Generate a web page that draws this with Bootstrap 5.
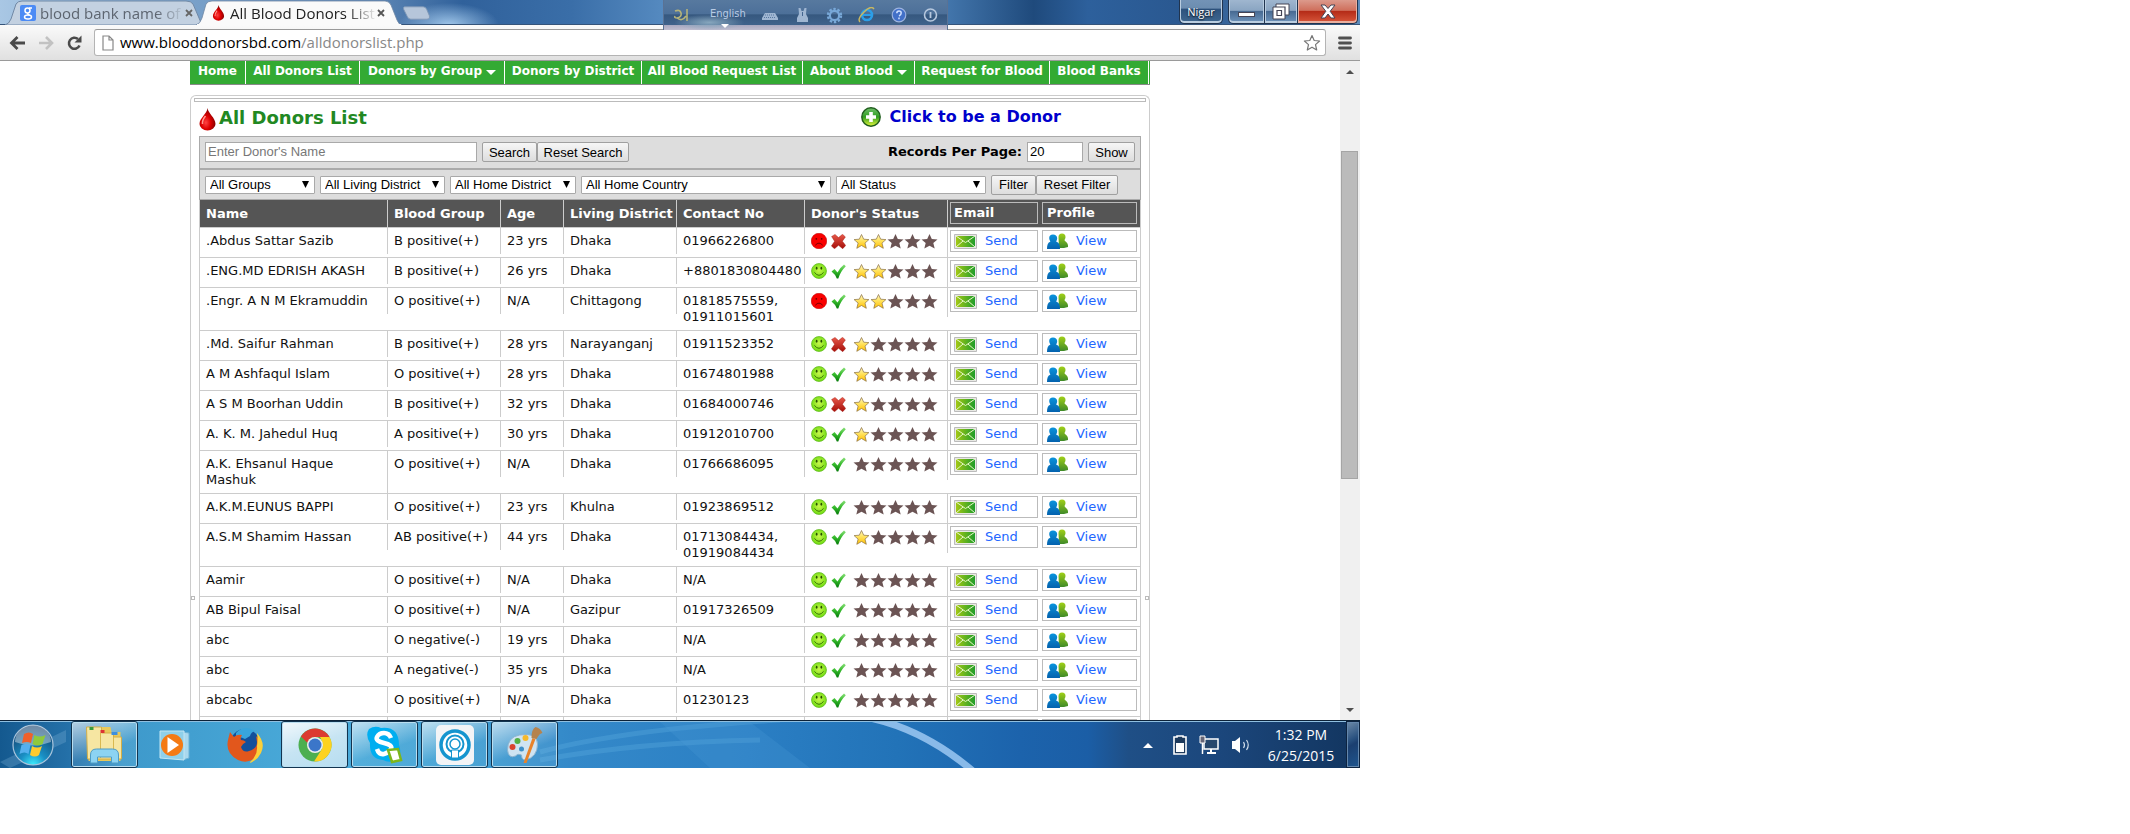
<!DOCTYPE html>
<html lang="en">
<head>
<meta charset="utf-8">
<meta name="viewport" content="width=device-width, initial-scale=1">
<title>All Blood Donors List</title>
<link rel="stylesheet" href="https://cdn.jsdelivr.net/npm/bootstrap@5.3.0/dist/css/bootstrap.min.css">
<style>
  html, body { height: 100%; }
  body { margin: 0; background: #fff; color: #000; overflow: hidden; font-family: "DejaVu Sans", Verdana, sans-serif; font-size: 13px; line-height: 16px; }
  a { text-decoration: none; }
  svg { display: block; flex: none; }
  .desk { width: 63.85%; height: calc(100% - 66px); }
  .ui { font-family: "Open Sans", "Segoe UI", sans-serif; }

  /* title bar */
  .strip { height: 25px; position: relative; background:
      radial-gradient(ellipse 50px 22px at 33% 100%, #9fc6ea 0, transparent 100%),
      linear-gradient(90deg, #a9c7e4 0, #86add3 8%, #5b84b3 28%, #30619b 34%, #3a6ea8 42%, #5a8fc4 50%, #4c81b8 68%, #1f4a7c 76%, #2d609c 80%, #2a5890 87%, #5e8cba 100%); }
  .strip::after { content: ""; position: absolute; left: 0; right: 0; bottom: 0; height: 1px; background: #35547a; }
  .tab { position: relative; height: 25px; margin-left: 5px; width: 198px; padding: 0 10px 0 15px; font-size: 15px; color: #5d6570; z-index: 1; }
  .tab + .tab { margin-left: -7px; width: 206px; color: #222; padding: 0 17px 0 15px; z-index: 2; }
  .tab .shape { position: absolute; left: 0; top: 0; width: 100%; height: 25px; }
  .tab .label { position: relative; flex: 1; margin-left: 4px; white-space: nowrap; line-height: 24px; -webkit-mask-image: linear-gradient(90deg, #000 80%, transparent); mask-image: linear-gradient(90deg, #000 80%, transparent); }
  .tab svg.ico { position: relative; }
  .plainbtn { border: 0; background: none; padding: 0; line-height: 0; color: inherit; }
  .tab .plainbtn { position: relative; }
  .winbtns { position: absolute; right: 2px; top: 0; height: 24px; }
  .winbtns button { border: 1px solid #20344f; border-top: 0; box-shadow: inset 0 -1px 0 1px #b9cde0; background: linear-gradient(#9fb6cf 0, #8aa5c2 45%, #486b93 50%, #7096bd 100%); height: 24px; padding: 0; color: #fff; }
  .winbtns .user { width: 44px; margin-right: 5px; border-radius: 0 0 5px 5px; font-size: 11px; line-height: 20px; background: linear-gradient(#7393b6 0, #6c8db0 35%, #2d527d 40%, #406890 100%); text-shadow: 0 1px 2px #000; }
  .winbtns .min { width: 37px; border-radius: 0 0 0 5px; }
  .winbtns .max { width: 33px; border-left: 0; }
  .winbtns .cls { width: 60px; border-left: 0; border-radius: 0 0 5px 0; background: linear-gradient(#dc9a8c 0, #cf6f5c 45%, #b52c18 50%, #d8583c 100%); box-shadow: inset 0 -1px 0 1px #eab0a0; }
  .winbtns svg { margin: 0 auto; }
  .ime { position: absolute; left: 663px; top: 0; width: 285px; height: 30px; z-index: 3; color: #b9cbe4; font-size: 11px; font-family: "DejaVu Sans Condensed", "DejaVu Sans", sans-serif; background:
      radial-gradient(ellipse 35px 8px at 16% 75%, #86a6bd 0, transparent 100%),
      linear-gradient(#57799f 0, #4d7099 45%, #36587f 50%, #3f628b 82%, #a9a9c1 84%, #c0bed0 100%); border: 1px solid #5a7294; border-top: 0; border-bottom: 0; }
  .ime svg { position: absolute; top: 7px; }
  .ime span { position: absolute; left: 46px; top: 6px; }

  /* address bar */
  .chromebar { height: 36px; background: linear-gradient(#fafafa, #e0e0e0); border-bottom: 1px solid #9a9a9a; padding: 4px 8px 4px 9px; gap: 12px; }
  .chromebar .address { flex: 1; height: 27px; padding: 0 4px 0 7px; gap: 6px; background: #fff; border: 1px solid #b4b4b4; border-top-color: #999; border-radius: 3px; font-size: 15px; line-height: 25px; }
  .chromebar .address .tail { color: #888; }

  /* web page */
  .viewport { flex: 1; min-height: 0; background: #fff; }
  .pagearea { flex: 1; min-width: 0; overflow: hidden; }
  .site { width: 960px; margin: 0 auto; }
  .scroller { width: 20px; background: #f0f0f0; padding: 8px 2px 8px 1px; }
  .scroller i { display: block; border: 4px solid transparent; border-top: 0; border-bottom-color: #505050; width: 8px; margin: 1px auto 0; }
  .scroller i.down { border-top: 4px solid #505050; border-bottom: 0; margin-top: auto; }
  .scroller b { display: block; width: 17px; height: 51%; margin-top: 77px; background: #bbb; border: 1px solid #a5a5a5; }
  .greennav { display: grid; grid-template-columns: 56fr 114fr 145fr 137fr 161fr 112fr 135fr 99fr 1fr; height: 24px; background: #3a3; border-bottom: 1px solid #888; font-size: 12px; font-weight: bold; }
  .greennav a { color: #fff; border-right: 1px solid #fff; text-align: center; line-height: 20px; white-space: nowrap; }
  .greennav .caret { display: inline-block; border: 5px solid transparent; border-top-color: #fff; border-bottom: 0; margin-left: 4px; }
  .panel { position: relative; margin-top: 10px; border: 1px solid #ccc; border-bottom: 0; border-radius: 6px 6px 0 0; padding: 2px 8px 0; }
  .panel .rail { height: 4px; border: 1px solid #bbb; margin: 0 -5px; }
  .panel .knob { position: absolute; top: 500px; width: 4px; height: 4px; border: 1px solid #bbb; }
  .titlerow { height: 34px; padding-bottom: 4px; }
  .titlerow h1 { font-size: 18px; line-height: 24px; font-weight: bold; color: #282; margin: 2px 0 0 3px; }
  .titlerow .join { font-size: 16px; font-weight: bold; color: #00c; margin-right: 80px; gap: 9px; }
  .band { height: 33px; background: #ddd; border: 1px solid #aaa; padding: 0 5px 1px; }
  .band + .band { height: 31px; padding-bottom: 0; }
  .band, .band input, .band button, .band select { color: #000; }
  .band .form-control, .band .form-select, .band .btn { font-family: "Liberation Sans", Arial, sans-serif; font-size: 13px; border-radius: 0; line-height: 15px; }
  .band .form-control { height: 20px; border: 1px solid #a9a9a9; padding: 0 2px 1px; }
  .band .form-control::placeholder { color: #777; opacity: 1; }
  .band .form-select { height: 18px; border: 1px solid #a9a9a9; padding: 0 16px 0 4px; border-radius: 1px; background: #fff url("data:image/svg+xml,%3Csvg xmlns='http://www.w3.org/2000/svg' width='7' height='7'%3E%3Cpath d='M0 0h7L3.5 7z'/%3E%3C/svg%3E") no-repeat right 5px center; background-size: 7px 7px; margin-right: 5px; }
  .band .btn { height: 20px; border: 1px solid #a0a0a0; padding: 0; background: linear-gradient(#f6f6f6, #ddd); border-radius: 2px; white-space: nowrap; }
  .w1 { width: 110px; } .w2 { width: 125px; } .w3 { width: 126px; } .w4 { width: 250px; } .w5 { width: 150px; }
  .band .namefield { flex: 0 0 272px; }
  .band .perpage { width: 56px; margin: 0 5px; }
  .b45 { width: 45px; } .b47 { width: 47px; } .b55 { width: 55px; margin-left: 5px; } .b82 { width: 82px; } .b92 { width: 92px; }

  /* donors table */
  .donors.table { table-layout: fixed; width: 100%; margin: 0; border-collapse: separate; border-spacing: 0; border-left: 1px solid #ccc; border-right: 1px solid #ccc; color: #111; }
  .donors col:nth-child(1) { width: 188px; } .donors col:nth-child(2), .donors col:nth-child(4) { width: 113px; }
  .donors col:nth-child(3) { width: 63px; } .donors col:nth-child(5) { width: 128px; } .donors col:nth-child(6) { width: 143px; } .donors col:nth-child(7) { width: 91px; }
  .donors.table > :not(caption) > tr > * { border: 0; border-bottom: 1px solid #ccc; box-shadow: none; height: 30px; padding: 5px 0 5px 6px; vertical-align: top; font-size: 13px; line-height: 16px; background: linear-gradient(#ccc, #ccc) no-repeat right top / 1px 26px; }
  .donors.table > tbody > tr > .deep { background-size: 1px 100%; }
  .donors.table > tbody > tr > .stat { background-size: 1px 29px; padding: 5px 0 0 6px; }
  .donors.table > thead > tr > th { height: 28px; color: #fff; background: #555 linear-gradient(#ccc, #ccc) no-repeat right top / 1px 100%; }
  .donors.table > thead > tr > th:not(.act) { padding-top: 6px; }
  .donors.table > :not(caption) > tr > .act { background-image: none; padding: 2px 0 0 3px; }
  .donors.table > :not(caption) > tr > .act.mail { padding-left: 2px; }
  .actbox { display: flex; align-items: center; height: 22px; border: 1px solid #bbb; padding-left: 3px; margin-right: 3px; color: #26f; }
  .mail .actbox { margin-right: 1px; }
  .prof .actbox { padding-left: 4px; }
  .actbox span { margin-left: 8px; }
  th .actbox { color: #fff; }
  .stat .icons { display: flex; align-items: center; }
  .stat .stars { display: flex; margin-left: 7px; }

  /* taskbar */
  .taskbar { height: 48px; border-top: 1px solid #0c2238; box-shadow: inset 0 1px 0 #8fbfe0; color: #fff; position: relative; overflow: hidden; background: linear-gradient(90deg, #14598f 0, #2470a8 5%, #3e99cb 9%, #4aabda 24%, #3f9fd2 34%, #3489c9 42%, #2b7fc4 55%, #2273b8 66%, #1c63ac 75%, #1b5ea6 80%, #1f4f86 83%, #1b467b 90%, #12355f 100%); }
  .taskbar .swoosh { position: absolute; left: 0; top: 1px; width: 100%; height: 46px; }
  .taskbar button { position: relative; border: 0; background: none; padding: 0; color: #fff; height: 47px; }
  .taskbar .start { width: 66px; margin-right: 5px; }
  .taskbar .app { width: 67px; margin-right: 3px; }
  .taskbar .app svg, .taskbar .start svg { margin: 0 auto; }
  .taskbar .open { border: 1px solid #123450; border-radius: 3px; box-shadow: inset 0 0 0 1px #b9def0; background: linear-gradient(160deg, #ffffffaa 0, #ffffff44 40%, #ffffff11 60%); }
  .taskbar .live { background: linear-gradient(160deg, #ffffffee 0, #ffffffb0 50%, #ffffff99 100%); }
  .tray { position: relative; gap: 12px; margin-right: 7px; }
  .clock { font-size: 14px; line-height: 21px; text-align: center; width: 76px; }
  .taskbar .showdesk { width: 14px; border: 1px solid #0c2340; box-shadow: inset 0 0 0 1px #6487ac; background: linear-gradient(150deg, #6d8aa8 0, #28507f 40%, #1b3f70 50%, #1f568f 100%); }
</style>
</head>
<body>
<svg width="0" height="0" class="position-absolute" aria-hidden="true">
  <defs>
    <radialGradient id="gRed" cx=".4" cy=".65" r=".6"><stop offset="0" stop-color="#f44"/><stop offset=".5" stop-color="#d00"/><stop offset="1" stop-color="#800"/></radialGradient>
    <linearGradient id="gStar" x1="0" y1="0" x2="0" y2="1"><stop offset="0" stop-color="#fff6c8"/><stop offset=".4" stop-color="#ffe668"/><stop offset="1" stop-color="#ffbe00"/></linearGradient>
    <linearGradient id="gTick" x1="0" y1="0" x2="0" y2="1"><stop offset="0" stop-color="#8ae07a"/><stop offset=".5" stop-color="#35b92c"/><stop offset="1" stop-color="#067a0a"/></linearGradient>
    <linearGradient id="gCross" x1="0" y1="0" x2="0" y2="1"><stop offset="0" stop-color="#e8594a"/><stop offset="1" stop-color="#a50d08"/></linearGradient>
    <linearGradient id="gMail" x1="0" y1="0" x2="1" y2="0"><stop offset="0" stop-color="#a4c814"/><stop offset="1" stop-color="#1f9d2a"/></linearGradient>
    <linearGradient id="gBlue" x1="0" y1="0" x2="0" y2="1"><stop offset="0" stop-color="#0a93dc"/><stop offset="1" stop-color="#0462ae"/></linearGradient>
    <linearGradient id="gGreen" x1="0" y1="0" x2="0" y2="1"><stop offset="0" stop-color="#a0d018"/><stop offset="1" stop-color="#3f8a28"/></linearGradient>
    <linearGradient id="gPlus" x1="0" y1="0" x2="0" y2="1"><stop offset="0" stop-color="#6fbf6a"/><stop offset=".5" stop-color="#2f9e20"/><stop offset="1" stop-color="#e6f83a"/></linearGradient>
    <radialGradient id="gSmile" cx=".5" cy=".45" r=".55"><stop offset="0" stop-color="#c8f54a"/><stop offset="1" stop-color="#6edc10"/></radialGradient>
    <symbol id="drop" viewBox="0 0 17 23"><path d="M8.500 0C9 5 16.500 10 16.500 16a8 6.500 0 0 1-16 0C.5 10 8 6 8.500 0z" fill="url(#gRed)"/><path d="M6.500 8c-2 2.500-3.500 5-3 8" stroke="#ff9a90" stroke-width="1.500" fill="none"/></symbol>
    <symbol id="sad" viewBox="0 0 15 15"><circle cx="7.500" cy="7.500" r="7.300" fill="#f90000" stroke="#b00" stroke-width=".5"/><circle cx="5" cy="5.500" r=".8" fill="#600"/><circle cx="10" cy="5.500" r=".8" fill="#600"/><path d="M4 11.500q3.500-4 7 0" fill="none" stroke="#700" stroke-width=".9"/></symbol>
    <symbol id="smile" viewBox="0 0 15 15"><circle cx="7.500" cy="7.500" r="7" fill="url(#gSmile)" stroke="#62b820" stroke-width=".7"/><ellipse cx="5.300" cy="5" rx=".8" ry="1.400" fill="#264d00"/><ellipse cx="9.700" cy="5" rx=".8" ry="1.400" fill="#264d00"/><path d="M3.200 8.800q4.300 5.500 8.600 0" fill="none" stroke="#2d6000" stroke-width=".8"/></symbol>
    <symbol id="tick" viewBox="0 0 15 15"><path d="M.5 7.500 3.500 5l3 3.500Q9 3.500 13 .5l1.800 1.800Q9.500 7.500 7.300 14.500H5.800Q4 10 .5 7.500z" fill="url(#gTick)"/></symbol>
    <symbol id="cross" viewBox="0 0 15 15"><path d="M.6 2.500 4 .4l3.500 3.200L11.500.3l2.900 2.600-3 4.300 3.300 4.300-3 3.200-4.200-3.400-4 3.500L.4 12l3.200-4.700z" fill="url(#gCross)" stroke="#9c1008" stroke-width=".4"/></symbol>
    <symbol id="staron" viewBox="0 0 16 15"><path d="M8 .5l2.200 4.700 5.200.4-3.900 3.500 1.300 5.200L8 11.500l-4.700 2.800 1.300-5.200L.6 5.600l5.200-.4z" fill="url(#gStar)" stroke="#8a7040" stroke-width=".7"/></symbol>
    <symbol id="staroff" viewBox="0 0 16 15"><path d="M8 0l2.300 5 5.700.4-4.200 3.700 1.400 5.500L8 11.700l-5.200 2.900 1.400-5.500L0 5.400 5.700 5z" fill="#6b5454"/></symbol>
    <symbol id="envelope" viewBox="0 0 23 15"><path d="M.5.5h22v14H.5z" fill="#e8e8e4" stroke="#bbb"/><path d="M2 2h19v11H2z" fill="url(#gMail)"/><path d="M2 2l9.500 6.500L21 2M2 13l7-6M21 13l-7-6" stroke="#e8f8c8" fill="none"/></symbol>
    <symbol id="people" viewBox="0 0 21 16"><path d="M11.500 4a3.500 3.500 0 0 1 7 0c0 1.500-.7 2.300-1 3 0 1.300 3.500 2.500 3.500 5.500V14l-4 1h-5z" fill="url(#gGreen)"/><path d="M2.200 5q0-3.500 3.800-3.500T10.200 5c0 2-.9 2.800-.9 3.800C12 9.500 13.200 12 13 16H0c0-4 1-6.500 3.300-7.200C3.300 7.500 2.200 7 2.200 5z" fill="url(#gBlue)"/></symbol>
  </defs>
</svg>

<div class="desk d-flex flex-column">
  <header class="strip ui d-flex">
    <div class="tab d-flex align-items-center">
      <svg class="shape" viewBox="0 0 198 25" preserveAspectRatio="none"><path d="M0 25Q4 24 6 19L11 4Q13 1 17 1H181Q186 1 188 4L197 25z" fill="#c3d1e1" stroke="#7189a6"/></svg>
      <svg class="ico" width="16" height="16"><rect width="16" height="16" rx="2" fill="#4c8bf5"/><g fill="none" stroke="#fff" stroke-width="1.500"><circle cx="7.500" cy="5.500" r="2.500"/><ellipse cx="8" cy="12" rx="3.500" ry="2"/><path d="M9 3h3M7.500 8q0 1.500 2 2"/></g></svg>
      <span class="label">blood bank name of</span>
      <button class="plainbtn" aria-label="Close tab"><svg width="8" height="8"><path d="M1 1l6 6M7 1L1 7" stroke="#666" stroke-width="1.800"/></svg></button>
    </div>
    <div class="tab d-flex align-items-center">
      <svg class="shape" viewBox="0 0 206 25" preserveAspectRatio="none"><path d="M0 25Q4 24 6 18L10 4Q12 1 16 1H189Q193 1 195 5L201 20Q203 25 206 25z" fill="#fafafa" stroke="#6f86a3" stroke-width=".8"/><path d="M1 25h204" stroke="#fafafa" stroke-width="2"/></svg>
      <svg class="ico" width="15" height="16"><use href="#drop"/></svg>
      <span class="label">All Blood Donors List</span>
      <button class="plainbtn" aria-label="Close tab"><svg width="8" height="8"><path d="M1 1l6 6M7 1L1 7" stroke="#555" stroke-width="1.800"/></svg></button>
    </div>
    <button class="plainbtn align-self-start mt-1" aria-label="New tab"><svg width="30" height="18" viewBox="0 0 34 18"><path d="M3 2H24Q27 2 28 5L31 12Q32 16 28 16H10Q7 16 6 13L2 5Q1 2 3 2z" fill="#b6c6da" stroke="#7f97b5"/></svg></button>
    <div class="ime">
      <svg style="left:10px" width="15" height="16"><path d="M13 2v12M1 4q5-2 6 2t-4 5q-3 0-2-2M3 11q5 4 9-2" fill="none" stroke="#b5b37a" stroke-width="1.600"/></svg>
      <span>English</span>
      <svg style="left:57px;top:24px" width="8" height="4"><path d="M0 0h8L4 4z" fill="#fff"/></svg>
      <svg style="left:98px" width="16" height="14"><path d="M3 6h10l3 5v2H0v-2z" fill="#9fb6d2"/><path d="M3 8h10M2 10.500h12" stroke="#56779f" stroke-dasharray="1 1"/></svg>
      <svg style="left:132px" width="13" height="16"><path d="M2.500 1h2l1 3h2l1-3h2l-.5 6L12 11v4H1v-4l2-4z" fill="#9fb6d2"/><path d="M6.500 5v4" stroke="#43658f"/></svg>
      <svg style="left:162px" width="17" height="17"><circle cx="8.500" cy="8.500" r="6.500" fill="none" stroke="#78a8d8" stroke-width="2.400" stroke-dasharray="2.400 1.700"/><circle cx="8.500" cy="8.500" r="4.600" fill="none" stroke="#78a8d8" stroke-width="2.200"/></svg>
      <svg style="left:194px" width="17" height="16"><circle cx="9" cy="8" r="5" fill="none" stroke="#2b9ee8" stroke-width="2.600"/><path d="M5 8h9" stroke="#2b9ee8" stroke-width="2"/><path d="M2 15Q-1 12 6 5T16 2" fill="none" stroke="#c9b860" stroke-width="1.500"/></svg>
      <svg style="left:227px" width="16" height="16"><circle cx="8" cy="8" r="6.800" fill="#4270c8" stroke="#9db4e0" stroke-width="1.200"/><path d="M5.800 6.300q0-2.300 2.200-2.300t2.200 2-2.200 3M8 10.500v1.800" fill="none" stroke="#cfe0ff" stroke-width="1.500"/></svg>
      <svg style="left:259px" width="15" height="16"><circle cx="7.500" cy="8" r="6" fill="none" stroke="#b7c8de" stroke-width="1.600"/><path d="M7.500 5v6" stroke="#b7c8de" stroke-width="1.800"/></svg>
    </div>
    <div class="winbtns d-flex">
      <button class="user">Nigar</button>
      <button class="min" aria-label="Minimize"><svg width="17" height="10"><rect x=".5" y="5.500" width="16" height="4" fill="#fff" stroke="#445"/></svg></button>
      <button class="max" aria-label="Restore"><svg width="18" height="17"><path d="M4 1h13v11h-4v4H1V4h3z" fill="#fff" stroke="#445"/><path d="M4 4h9v8M5 7.500h4.500v5H5z" fill="none" stroke="#445" stroke-width="1.200"/></svg></button>
      <button class="cls" aria-label="Close"><svg width="16" height="15"><path d="M1 1h4l3 3.500L11 1h4l-4.800 6.300L15 14h-4L8 10l-3 4H1l4.800-6.700z" fill="#fff" stroke="#445"/></svg></button>
    </div>
  </header>

  <div class="chromebar ui d-flex align-items-center">
    <button class="plainbtn" aria-label="Back"><svg width="17" height="16"><path d="M16 8H3M8.500 2 2.500 8l6 6" fill="none" stroke="#4a4a4a" stroke-width="2.800"/></svg></button>
    <button class="plainbtn" aria-label="Forward"><svg width="17" height="16"><path d="M1 8h12M8 2l6 6-6 6" fill="none" stroke="#c2c2c2" stroke-width="2.600"/></svg></button>
    <button class="plainbtn" aria-label="Reload"><svg width="15" height="16"><path d="M12.500 10.500A5.500 5.500 0 1 1 11 4" fill="none" stroke="#4a4a4a" stroke-width="2.600"/><path d="M14.500.5v7h-7z" fill="#4a4a4a"/></svg></button>
    <div class="address d-flex align-items-center">
      <svg width="12" height="16"><path d="M1 1h6l4 4v10H1zM7 1v4h4" fill="#fff" stroke="#888" stroke-width="1.200"/></svg>
      <span class="flex-fill">www.blooddonorsbd.com<span class="tail">/alldonorslist.php</span></span>
      <svg width="18" height="18"><path d="M9 1.500l2.200 5 5.400.5-4.100 3.600 1.200 5.400L9 13.200 4.300 16l1.200-5.400L1.400 7l5.400-.5z" fill="#fff" stroke="#777" stroke-width="1.200" stroke-linejoin="round"/></svg>
    </div>
    <button class="plainbtn" aria-label="Menu"><svg width="14" height="14"><path d="M1.500 2h11M1.500 7h11M1.500 12h11" stroke="#505050" stroke-width="2.800" stroke-linecap="round"/></svg></button>
  </div>

  <div class="viewport d-flex">
    <main class="pagearea">
      <div class="site">
        <nav class="greennav">
          <a href="#">Home</a><a href="#">All Donors List</a><a href="#">Donors by Group<span class="caret"></span></a><a href="#">Donors by District</a><a href="#">All Blood Request List</a><a href="#">About Blood<span class="caret"></span></a><a href="#">Request for Blood</a><a href="#">Blood Banks</a>
        </nav>
        <section class="panel">
          <div class="rail"></div>
          <span class="knob start-0"></span><span class="knob end-0"></span>
          <div class="titlerow d-flex align-items-center">
            <svg class="mt-1" width="17" height="23"><use href="#drop"/></svg>
            <h1 class="me-auto">All Donors List</h1>
            <a class="join d-flex align-items-center" href="#">
              <svg width="20" height="20"><circle cx="10" cy="10" r="9.200" fill="url(#gPlus)" stroke="#1f5c1c" stroke-width="1.400"/><path d="M10 5v10M5 10h10" stroke="#fff" stroke-width="3.600"/></svg>
              Click to be a Donor</a>
          </div>
          <form class="band d-flex align-items-center">
            <input class="form-control namefield" type="text" placeholder="Enter Donor's Name" aria-label="Donor's name">
            <button type="button" class="btn b55">Search</button>
            <button type="button" class="btn b92 me-auto">Reset Search</button>
            <label class="fw-bold" for="perpage">Records Per Page:</label>
            <input class="form-control perpage" id="perpage" type="text" value="20">
            <button type="button" class="btn b47">Show</button>
          </form>
          <form class="band d-flex align-items-center">
            <select class="form-select w1" aria-label="Group"><option>All Groups</option></select>
            <select class="form-select w2" aria-label="Living district"><option>All Living District</option></select>
            <select class="form-select w3" aria-label="Home district"><option>All Home District</option></select>
            <select class="form-select w4" aria-label="Home country"><option>All Home Country</option></select>
            <select class="form-select w5" aria-label="Status"><option>All Status</option></select>
            <button type="button" class="btn b45">Filter</button>
            <button type="button" class="btn b82">Reset Filter</button>
          </form>
          <table class="table donors">
            <colgroup><col><col><col><col><col><col><col><col></colgroup>
            <thead><tr><th>Name</th><th>Blood Group</th><th>Age</th><th>Living District</th><th>Contact No</th><th>Donor's Status</th><th class="act mail"><div class="actbox">Email</div></th><th class="act prof"><div class="actbox">Profile</div></th></tr></thead>
            <tbody id="rows"></tbody>
          </table>
        </section>
      </div>
    </main>
    <div class="scroller d-flex flex-column"><i></i><b></b><i class="down"></i></div>
  </div>

  <footer class="taskbar ui d-flex">
    <svg class="swoosh" viewBox="0 0 1360 46" preserveAspectRatio="none">
      <path d="M540 30Q620 8 780 -2M540 38Q640 20 760 18" stroke="#5cabe0" stroke-width="5" fill="none" opacity=".35"/>
      <path d="M660 0h90l60 46h-100z" fill="#4b9bd8" opacity=".25"/>
      <path d="M870-4Q925 8 974 50" stroke="#9cc8f2" stroke-width="7" fill="none" opacity=".85"/>
      <path d="M0 40L66 8v12L10 46z" fill="#7fb2d8" opacity=".3"/>
    </svg>
    <button class="start" aria-label="Start"><svg width="44" height="44" viewBox="0 0 42 44"><defs><radialGradient id="orb" cx=".5" cy="1" r=".95"><stop offset="0" stop-color="#3ff0ff"/><stop offset=".35" stop-color="#1a8fc4"/><stop offset="1" stop-color="#123f6c"/></radialGradient></defs><circle cx="21" cy="22" r="20" fill="url(#orb)" stroke="#a8c4dc" stroke-width="1.200"/><path d="M3 19a18 17 0 0 1 36 0q-18 7-36 0z" fill="#fff" opacity=".4"/><path d="M12 11q5-3 9-0l-2 9q-4-2-9 0z" fill="#f0602a"/><path d="M22.500 12q5 3 11 0l-3 9q-5 3-10-0z" fill="#8fc93c"/><path d="M9.500 22q5-2 9 0l-2 9q-4-3-9 0z" fill="#55b0ee"/><path d="M20 23q5 3 10 0l-3 9q-4 3-9 0z" fill="#ffcb2e"/></svg></button>
    <button class="app open" aria-label="Explorer"><svg width="39" height="40" viewBox="0 0 38 40"><path d="M3 5h8l2-3h12l1 5h9v29H3z" fill="#e9c95a"/><path d="M1 2h15v6h12v4h8v22H2z" fill="#f6e6a2" stroke="#d2ae48"/><path d="M15 8v25M28 12v21" stroke="#d8b850"/><path d="M4 2h4v3H4z" fill="#3a9c3a"/><path d="M15 5h4v3h-4z" fill="#d33"/><path d="M26 7h6v3h-6z" fill="#3c8fe0"/><path d="M5 38v-8q0-6 6-6h16q6 0 6 6v8h-7v-6H12v6z" fill="#8cd3f2" stroke="#4f9cc4"/></svg></button>
    <button class="app" aria-label="Media Player"><svg width="34" height="34" viewBox="0 0 32 34"><path d="M24 4l6 1v25l-6 2z" fill="#a9d8ee" stroke="#6ab2d6"/><path d="M1 3h24v29L1 30z" fill="#8fd0ea" stroke="#c3e6f4"/><circle cx="13" cy="17" r="11" fill="#f47a14"/><path d="M8.500 9 20 17 8.500 25z" fill="#fff"/></svg></button>
    <button class="app" aria-label="Firefox"><svg width="36" height="38" viewBox="0 0 36 38"><circle cx="18" cy="18" r="15" fill="#13509a"/><path d="M9 7Q17-2 28 5q-4 1-5 5l-5 3q-5-3-9-1z" fill="#38a5dc"/><path d="M3 6q3 4 4 5 3-3 8-2-2 3-1 5 3 0 5 2-4 2-5 5 2 6 8 4 8-2 8-9l-1-6Q37 18 31 29 22 39 11 34-2 27 1 14z" fill="#e2571c"/><path d="M30 7q9 10 4 20-4 8-12 10 9-7 8-17 1-7 0-13z" fill="#fbd03a"/></svg></button>
    <button class="app open live" aria-label="Chrome"><svg width="36" height="36" viewBox="0 0 34 36"><circle cx="17" cy="18" r="16.500" fill="#4caf50"/><path d="M3 9.500A16.500 16.500 0 0 1 31.500 10H17a8 8 0 0 0-7.500 6z" fill="#dc3a30"/><path d="M31.500 10A16.500 16.500 0 0 1 16 34.500L24 22q2-6-2-12z" fill="#fdd21f"/><circle cx="17" cy="18" r="8" fill="#eee"/><circle cx="17" cy="18" r="6.500" fill="#3b76c9"/></svg></button>
    <button class="app open" aria-label="Skype"><svg width="38" height="38" viewBox="0 0 38 38"><path d="M3 3q6-4 12-1 18-2 18 17 4 10-4 16-7 2-12-1Q3 33 4 17-1 9 3 3z" fill="#00aef0"/><path d="M25 12q-2-5-7-5t-7 4 7 6 7 6-7 5-7-5" fill="none" stroke="#fff" stroke-width="4.500"/><path d="M22 24l10-1 3 11-9 2z" fill="#fff" stroke="#7db61c" stroke-width="2.500"/></svg></button>
    <button class="app open" aria-label="Hotspot"><svg width="40" height="40" viewBox="0 0 38 40"><rect width="38" height="40" rx="5" fill="#f3f4f6"/><circle cx="19" cy="20" r="14" fill="#fff" stroke="#1595cf" stroke-width="3.500"/><circle cx="19" cy="19" r="8.500" fill="none" stroke="#1595cf" stroke-width="2"/><circle cx="19" cy="19" r="5" fill="#fff" stroke="#1595cf" stroke-width="1.500"/><path d="M15.500 25h7v8h-7z" fill="#fff" stroke="#1595cf"/></svg></button>
    <button class="app open" aria-label="Paint"><svg width="39" height="38" viewBox="0 0 38 38"><path d="M2 24Q2 11 14 9q18-3 18 9 0 13-12 16-4 0-4-5-4-2-6 1Q3 33 2 24z" fill="#cfe4f2" stroke="#8db4cf"/><circle cx="7" cy="21" r="3" fill="#d9432f"/><circle cx="12" cy="15" r="3" fill="#52b043"/><circle cx="20" cy="12" r="3" fill="#f5b92c"/><circle cx="16" cy="23" r="2.500" fill="#3e90c8"/><path d="M18 37l9-25 3 1-9 24z" fill="#e8832a"/><path d="M26 12q0-9 4-11 5 1 7 6-3 0-6 6z" fill="#b5834e"/></svg></button>
    <div class="tray d-flex align-items-center ms-auto">
      <svg width="10" height="6"><path d="M0 6l5-5 5 5z" fill="#fff"/></svg>
      <svg class="ms-2" width="14" height="20"><path d="M4 2V1h6v1h3v17H1V2z" fill="#1d3a5c" stroke="#fff" stroke-width="1.600"/><rect x="3" y="8" width="8" height="9" fill="#fff"/></svg>
      <svg width="20" height="20"><path d="M5 4h14v10H5z" fill="#27486d" stroke="#fff" stroke-width="1.500"/><path d="M12 14v3M8 18h9" stroke="#fff" stroke-width="2"/><path d="M1 1h5v7H1z" fill="#667" stroke="#fff"/><path d="M3.500 8v11" stroke="#fff" stroke-width="1.500"/></svg>
      <svg width="20" height="18"><path d="M1 5h3l5-4v16l-5-4H1z" fill="#fff"/><path d="M12.500 6q2 3 0 6M15.500 4q3.500 5 0 10" fill="none" stroke="#cfdcea" stroke-width="1.200"/></svg>
      <div class="clock">1:32 PM<br>6/25/2015</div>
    </div>
    <button class="showdesk" aria-label="Show desktop"></button>
  </footer>
</div>

<script>
  // name, group, age, district, contact, face, verified, gold stars
  const donors = [
    [".Abdus Sattar Sazib", "B positive(+)", "23 yrs", "Dhaka", "01966226800", 0, 0, 2],
    [".ENG.MD EDRISH AKASH", "B positive(+)", "26 yrs", "Dhaka", "+8801830804480", 1, 1, 2],
    [".Engr. A N M Ekramuddin", "O positive(+)", "N/A", "Chittagong", "01818575559,<br>01911015601", 0, 1, 2],
    [".Md. Saifur Rahman", "B positive(+)", "28 yrs", "Narayanganj", "01911523352", 1, 0, 1],
    ["A M Ashfaqul Islam", "O positive(+)", "28 yrs", "Dhaka", "01674801988", 1, 1, 1],
    ["A S M Boorhan Uddin", "B positive(+)", "32 yrs", "Dhaka", "01684000746", 1, 0, 1],
    ["A. K. M. Jahedul Huq", "A positive(+)", "30 yrs", "Dhaka", "01912010700", 1, 1, 1],
    ["A.K. Ehsanul Haque<br>Mashuk", "O positive(+)", "N/A", "Dhaka", "01766686095", 1, 1, 0],
    ["A.K.M.EUNUS BAPPI", "O positive(+)", "23 yrs", "Khulna", "01923869512", 1, 1, 0],
    ["A.S.M Shamim Hassan", "AB positive(+)", "44 yrs", "Dhaka", "01713084434,<br>01919084434", 1, 1, 1],
    ["Aamir", "O positive(+)", "N/A", "Dhaka", "N/A", 1, 1, 0],
    ["AB Bipul Faisal", "O positive(+)", "N/A", "Gazipur", "01917326509", 1, 1, 0],
    ["abc", "O negative(-)", "19 yrs", "Dhaka", "N/A", 1, 1, 0],
    ["abc", "A negative(-)", "35 yrs", "Dhaka", "N/A", 1, 1, 0],
    ["abcabc", "O positive(+)", "N/A", "Dhaka", "01230123", 1, 1, 0],
    ["", "", "", "", "", 1, 1, 0]
  ];
  const icon = (id, w, h, cls = "") => `<svg class="${cls}" width="${w}" height="${h}"><use href="#${id}"/></svg>`;
  document.getElementById("rows").innerHTML = donors.map(d => {
    const cells = d.slice(0, 5).map(t => `<td class="${t.includes("<br>") ? "deep" : ""}">${t}</td>`).join("");
    const last = d[0] === "";
    const stars = [0, 1, 2, 3, 4].map(i => icon(i < d[7] ? "staron" : "staroff", 17, 15)).join("");
    const status = last ? "" : `<div class="icons">${icon(d[5] ? "smile" : "sad", 16, 16)}${icon(d[6] ? "tick" : "cross", 15, 15, "ms-1")}<div class="stars">${stars}</div></div>`;
    return `<tr>${cells}<td class="stat">${status}</td>
      <td class="act mail"><a class="actbox" href="#">${last ? "" : icon("envelope", 23, 15) + "<span>Send</span>"}</a></td>
      <td class="act prof"><a class="actbox" href="#">${last ? "" : icon("people", 21, 16) + "<span>View</span>"}</a></td></tr>`;
  }).join("");
</script>
<script src="https://cdn.jsdelivr.net/npm/bootstrap@5.3.0/dist/js/bootstrap.bundle.min.js"></script>
</body>
</html>
